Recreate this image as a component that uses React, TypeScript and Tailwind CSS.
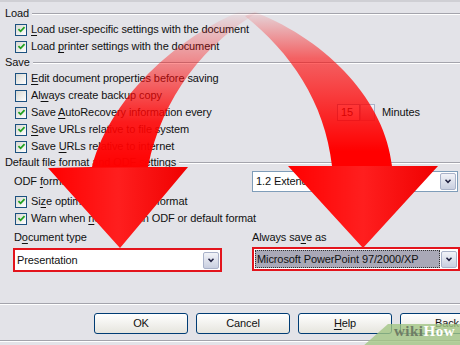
import type { ReactNode } from "react";

function CheckBox({ checked }: { checked?: boolean }) {
  return (
    <span className="flex h-[12px] w-[12px] shrink-0 items-center justify-center border border-[#1c5180] bg-linear-to-br from-[#d8d8d2] to-white">
      {checked ? (
        <svg viewBox="0 0 10 10" className="h-[9px] w-[9px]">
          <path d="M1.6 4.6 L4 7 L8.4 2.4" fill="none" stroke="#21a121" strokeWidth="2" />
        </svg>
      ) : null}
    </span>
  );
}

function CheckRow({ checked, children }: { checked?: boolean; children: ReactNode }) {
  return (
    <div className="flex h-[17px] items-center gap-[4px] pl-[15px]">
      <CheckBox checked={checked} />
      <span className="whitespace-nowrap">{children}</span>
    </div>
  );
}

function GroupHeader({ label }: { label: string }) {
  return (
    <div className="flex h-[15px] items-center gap-[3px] pl-[5px]">
      <span className="whitespace-nowrap">{label}</span>
      <div className="h-[2px] flex-1 border-t border-b border-t-[#a4a4ac] border-b-white" />
    </div>
  );
}

function DropButton() {
  return (
    <span className="flex h-[17px] w-[16px] shrink-0 items-center justify-center rounded-[2px] border border-[#a9b2c9] bg-linear-to-b from-[#f2f3f8] to-[#c9cfe0]">
      <svg viewBox="0 0 8 6" className="h-[5px] w-[8px]">
        <path d="M1 1 L4 4 L7 1" fill="none" stroke="#202040" strokeWidth="1.8" />
      </svg>
    </span>
  );
}

function Mn({ children }: { children: ReactNode }) {
  return <u className="underline-offset-2">{children}</u>;
}

export default function App() {
  return (
    <div className="relative h-[345px] w-[460px] overflow-hidden border-t-2 border-[#cfcfd4] bg-[#e3e3e8] text-[11px] tracking-[-0.1px] text-[#111] font-['Liberation_Sans',Arial,sans-serif]">
      <div className="flex flex-col pt-[4px]">
        <GroupHeader label="Load" />
        <CheckRow checked>
          <Mn>L</Mn>oad user-specific settings with the document
        </CheckRow>
        <CheckRow checked>
          Load <Mn>p</Mn>rinter settings with the document
        </CheckRow>

        <GroupHeader label="Save" />
        <CheckRow>
          <Mn>E</Mn>dit document properties before saving
        </CheckRow>
        <CheckRow>
          Al<Mn>w</Mn>ays create backup copy
        </CheckRow>
        <div className="flex h-[17px] items-center">
          <div className="flex w-[337px] items-center gap-[4px] pl-[15px]">
            <CheckBox checked />
            <span className="whitespace-nowrap">
              Save <Mn>A</Mn>utoRecovery information every
            </span>
          </div>
          <div className="flex h-[17px] w-[23px] items-center border border-[#7f9db9] bg-white pl-[3px]">
            15
          </div>
          <div className="flex h-[17px] w-[15px] flex-col border border-[#a9b2c9] bg-linear-to-b from-[#f2f3f8] to-[#c9cfe0]" />
          <span className="ml-[7px]">Minutes</span>
        </div>
        <CheckRow checked>
          <Mn>S</Mn>ave URLs relative to file system
        </CheckRow>
        <CheckRow checked>
          Save <Mn>U</Mn>RLs relative to internet
        </CheckRow>

        <GroupHeader label="Default file format and ODF settings" />
        <div className="flex h-[22px] items-center">
          <span className="w-[252px] pl-[14px]">
            ODF <Mn>f</Mn>ormat version
          </span>
          <div className="flex h-[21px] w-[206px] items-center justify-between border border-[#7f9db9] bg-white pl-[3px] pr-[1px]">
            <span>1.2 Extended</span>
            <DropButton />
          </div>
        </div>
        <div className="mt-[1px]">
          <CheckRow checked>
            Si<Mn>z</Mn>e optimization for ODF format
          </CheckRow>
          <CheckRow checked>
            Warn when <Mn>n</Mn>ot saving in ODF or default format
          </CheckRow>
        </div>

        <div className="flex">
          <div className="flex w-[252px] flex-col pl-[13px]">
            <div className="flex h-[21px] items-center pl-[1px]">
              D<Mn>o</Mn>cument type
            </div>
            <div className="flex h-[24px] w-[209px] items-center justify-between border-2 border-[#e3141c] bg-white pl-[2px] pr-[1px]">
              <span>Presentation</span>
              <DropButton />
            </div>
          </div>
          <div className="flex flex-1 flex-col">
            <div className="flex h-[21px] items-center">
              Always sa<Mn>v</Mn>e as
            </div>
            <div className="-mt-px flex h-[24px] w-[208px] items-center gap-[1px] border-2 border-[#e3141c] bg-white pl-[1px] pr-[1px]">
              <span className="flex h-[18px] flex-1 items-center border border-dotted border-[#333] bg-[#a9a8b7] pl-[1px] whitespace-nowrap">
                Microsoft PowerPoint 97/2000/XP
              </span>
              <DropButton />
            </div>
          </div>
        </div>

        <div className="mt-[31px] h-[2px] border-t border-b border-t-[#a4a4ac] border-b-white" />

        <div className="mt-[8px] flex h-[21px] gap-[8px] pl-[94px]">
          {[
            <span key="ok">OK</span>,
            <span key="c">Cancel</span>,
            <span key="h">
              <Mn>H</Mn>elp
            </span>,
            <span key="b">
              <Mn>B</Mn>ack
            </span>,
          ].map((label, i) => (
            <div
              key={i}
              className="flex h-[21px] w-[94px] shrink-0 items-center justify-center rounded-[3px] border border-[#003c74] bg-linear-to-b from-white to-[#e6e5de]"
            >
              {label}
            </div>
          ))}
        </div>

        <div className="mt-[6px] h-[2px] border-t border-b border-t-[#a4a4ac] border-b-white" />
      </div>

      <svg
        viewBox="0 0 460 345"
        className="pointer-events-none absolute inset-0 h-[345px] w-[460px]"
      >
        <defs>
          <linearGradient id="leftFade" gradientUnits="userSpaceOnUse" x1="0" y1="8" x2="0" y2="168">
            <stop offset="0" stopColor="#ff0000" stopOpacity="0" />
            <stop offset="0.35" stopColor="#ff0a0a" stopOpacity="0.45" />
            <stop offset="0.7" stopColor="#ff0000" stopOpacity="0.88" />
            <stop offset="1" stopColor="#ff0000" stopOpacity="1" />
          </linearGradient>
          <linearGradient id="rightFade" gradientUnits="userSpaceOnUse" x1="0" y1="10" x2="0" y2="165">
            <stop offset="0" stopColor="#ff0000" stopOpacity="0.05" />
            <stop offset="0.3" stopColor="#ff0a0a" stopOpacity="0.6" />
            <stop offset="0.65" stopColor="#ff0000" stopOpacity="0.82" />
            <stop offset="0.9" stopColor="#ff0000" stopOpacity="1" />
          </linearGradient>
          <linearGradient id="shade" x1="0" y1="0" x2="1" y2="0">
            <stop offset="0" stopColor="#ffffff" stopOpacity="0" />
            <stop offset="0.5" stopColor="#ffffff" stopOpacity="0.12" />
            <stop offset="1" stopColor="#800000" stopOpacity="0.12" />
          </linearGradient>
        </defs>
        <path
          d="M 248 6 C 185 30, 112 90, 92 165 L 48 166 L 120 246 L 188 165 L 148 165 C 162 95, 205 40, 262 8 Z"
          fill="url(#leftFade)"
        />
        <path
          d="M 245 14 C 290 50, 325 100, 332 164 L 288 164 L 363 246 L 438 164 L 392 164 C 385 100, 330 40, 255 10 Z"
          fill="url(#rightFade)"
        />
        <path d="M 48 166 L 120 246 L 188 165 Z" fill="url(#shade)" />
        <path d="M 288 164 L 363 246 L 438 164 Z" fill="url(#shade)" />
        <polygon points="362,345 388,322 460,322 460,345" fill="#a3c585" fillOpacity="0.8" />
      </svg>

      <div className="pointer-events-none absolute bottom-[3px] right-[5px] text-[15px] font-bold tracking-[0.5px] font-['Liberation_Serif',serif]">
        <span className="text-[#6f7d66]">wiki</span>
        <span className="text-white">How</span>
      </div>
    </div>
  );
}
